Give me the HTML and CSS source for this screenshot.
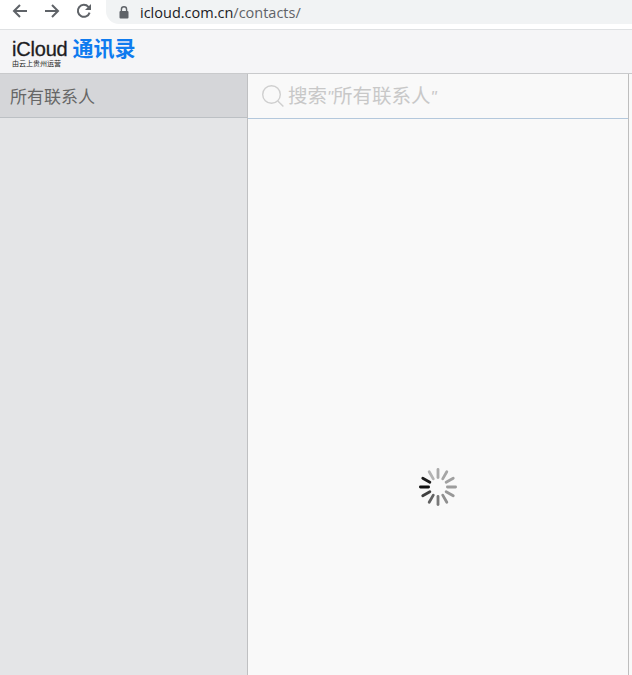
FILE: index.html
```html
<!DOCTYPE html>
<html lang="zh-CN">
<head>
    <meta charset="UTF-8">
    <title>iCloud 通讯录</title>
    <link rel="stylesheet" href="styles.css">
</head>
<body>

    <!-- browser toolbar -->
    <div class="toolbar">
        <svg class="nav-icon" width="16" height="16" viewBox="0 0 16 16"><path d="M15 8H2M8 2 2 8l6 6" /></svg>
        <svg class="nav-icon" width="16" height="16" viewBox="0 0 16 16"><path d="M1 8h13M8 2l6 6-6 6" /></svg>
        <svg class="nav-icon" width="16" height="16" viewBox="0 0 16 16"><path d="M13.6 9.6A6 6 0 1 1 12.4 3.9L14.4 5.8" /><path class="fill" d="M15 1v6H9z" /></svg>
        <div class="address">
            <svg class="lock" width="10" height="13" viewBox="0 0 10 13"><path d="M2.4 5V3.4a2.6 2.6 0 0 1 5.2 0V5" /><rect x="0.5" y="5" width="9" height="7.5" rx="1" /></svg>
            <span class="host">icloud.com.cn</span><span class="path">/contacts/</span>
        </div>
    </div>

    <!-- app header -->
    <div class="header">
        <div class="logo">
            <div class="logo-top">
                <span class="brand">iCloud</span>
                <span class="app-name">通讯录</span>
            </div>
            <div class="operator">由云上贵州运营</div>
        </div>
    </div>

    <div class="app">
        <div class="sidebar">
            <div class="group">所有联系人</div>
        </div>

        <div class="list">
            <div class="search">
                <svg class="search-icon" width="24" height="24" viewBox="0 0 24 24"><circle cx="10.5" cy="10.5" r="8.8" /><path d="m16.8 17 5.6 5.6" /></svg>
                <span class="placeholder">搜索<i class="quote">"</i>所有联系人<i class="quote">"</i></span>
            </div>
            <div class="loading">
                <svg width="38" height="38" viewBox="0 0 38 38">
                    <rect class="spoke" x="17.6" y="0" width="2.8" height="11" rx="1.4" opacity="0.34" />
                    <rect class="spoke" x="17.6" y="0" width="2.8" height="11" rx="1.4" opacity="0.36" transform="rotate(30 19 19)" />
                    <rect class="spoke" x="17.6" y="0" width="2.8" height="11" rx="1.4" opacity="0.38" transform="rotate(60 19 19)" />
                    <rect class="spoke" x="17.6" y="0" width="2.8" height="11" rx="1.4" opacity="0.4" transform="rotate(90 19 19)" />
                    <rect class="spoke" x="17.6" y="0" width="2.8" height="11" rx="1.4" opacity="0.42" transform="rotate(120 19 19)" />
                    <rect class="spoke" x="17.6" y="0" width="2.8" height="11" rx="1.4" opacity="0.46" transform="rotate(150 19 19)" />
                    <rect class="spoke" x="17.6" y="0" width="2.8" height="11" rx="1.4" opacity="0.55" transform="rotate(180 19 19)" />
                    <rect class="spoke" x="17.6" y="0" width="2.8" height="11" rx="1.4" opacity="0.65" transform="rotate(210 19 19)" />
                    <rect class="spoke" x="17.6" y="0" width="2.8" height="11" rx="1.4" opacity="0.8" transform="rotate(240 19 19)" />
                    <rect class="spoke" x="17.6" y="0" width="2.8" height="11" rx="1.4" opacity="1" transform="rotate(270 19 19)" />
                    <rect class="spoke" x="17.6" y="0" width="2.8" height="11" rx="1.4" opacity="0.95" transform="rotate(300 19 19)" />
                    <rect class="spoke" x="17.6" y="0" width="2.8" height="11" rx="1.4" opacity="0.3" transform="rotate(330 19 19)" />
                </svg>
            </div>
        </div>

        <div class="detail"></div>
    </div>

</body>
</html>
```

FILE: styles.css
```css
/*reset*/
html,body{
    margin: 0;
    padding: 0;
    height: 100%;
    overflow: hidden;
    background: #fff;
    font-family: "Liberation Sans", "Noto Sans CJK SC", sans-serif;
}
body{
    display: flex;
    flex-direction: column;
}

/*1.browser toolbar*/
.toolbar{
    height: 29px;
    flex: none;
    display: flex;
    align-items: flex-start;
    padding-left: 12px;
    gap: 16px;
    border-bottom: 1px solid #dfe1e3;
    box-sizing: content-box;
}
.nav-icon{
    margin-top: 3px;
    fill: none;
    stroke: #5f6368;
    stroke-width: 2;
}
.nav-icon .fill{
    fill: #5f6368;
    stroke: none;
}
.address{
    flex: 1;
    height: 24px;
    margin-left: -2px;
    padding-left: 13px;
    display: flex;
    align-items: center;
    background: #f1f3f4;
    border-radius: 0 0 0 13px;
    font-family: "Open Sans", sans-serif;
    font-size: 14.5px;
    white-space: nowrap;
}
.lock{
    margin-right: 11px;
    fill: #5f6368;
    stroke: #5f6368;
}
.lock path{
    fill: none;
    stroke-width: 1.4;
}
.lock rect{
    stroke: none;
}
.host{
    color: #202124;
}
.path{
    color: #5f6368;
}

/*2.app header*/
.header{
    height: 43px;
    flex: none;
    background: #f5f5f7;
    border-bottom: 1px solid #c9cacc;
    padding-left: 12px;
    display: flex;
    align-items: center;
}
.logo-top{
    display: flex;
    align-items: center;
    gap: 5px;
    height: 24px;
}
.brand{
    font-size: 20px;
    line-height: 24px;
    letter-spacing: -0.2px;
    margin-top: 2px;
    color: #1d1d1f;
    -webkit-text-stroke: 0.3px #1d1d1f;
}
.app-name{
    font-size: 21px;
    line-height: 24px;
    font-weight: bold;
    margin-top: 1px;
    color: #0f7bef;
}
.operator{
    font-size: 7px;
    line-height: 7px;
    color: #222;
}

/*3.columns*/
.app{
    flex: 1;
    display: flex;
    min-height: 0;
}
.sidebar{
    width: 247px;
    flex: none;
    background: #e4e5e7;
    border-right: 1px solid #bfc0c2;
}
.group{
    height: 43px;
    line-height: 47px;
    padding-left: 10px;
    font-size: 17px;
    color: #666;
    background: #d5d6d9;
    border-bottom: 1px solid #bcc0c4;
}
.list{
    width: 380px;
    flex: none;
    background: #f9f9f9;
    border-right: 1px solid #bebebe;
}
.search{
    height: 44px;
    display: flex;
    align-items: center;
    padding-left: 13px;
    gap: 3px;
    border-bottom: 1px solid #b4c8dc;
}
.search-icon{
    fill: none;
    stroke: #cfcfcf;
    stroke-width: 1.4;
}
.placeholder{
    font-size: 19.5px;
    line-height: 24px;
    margin-top: 2px;
    color: #c8c8c8;
}
.quote{
    font-size: 17px;
}
.loading{
    padding-top: 349px;
    display: flex;
    justify-content: center;
}
.spoke{
    fill: #111;
}
.detail{
    flex: 1;
    background: #f9f9f9;
}
```
